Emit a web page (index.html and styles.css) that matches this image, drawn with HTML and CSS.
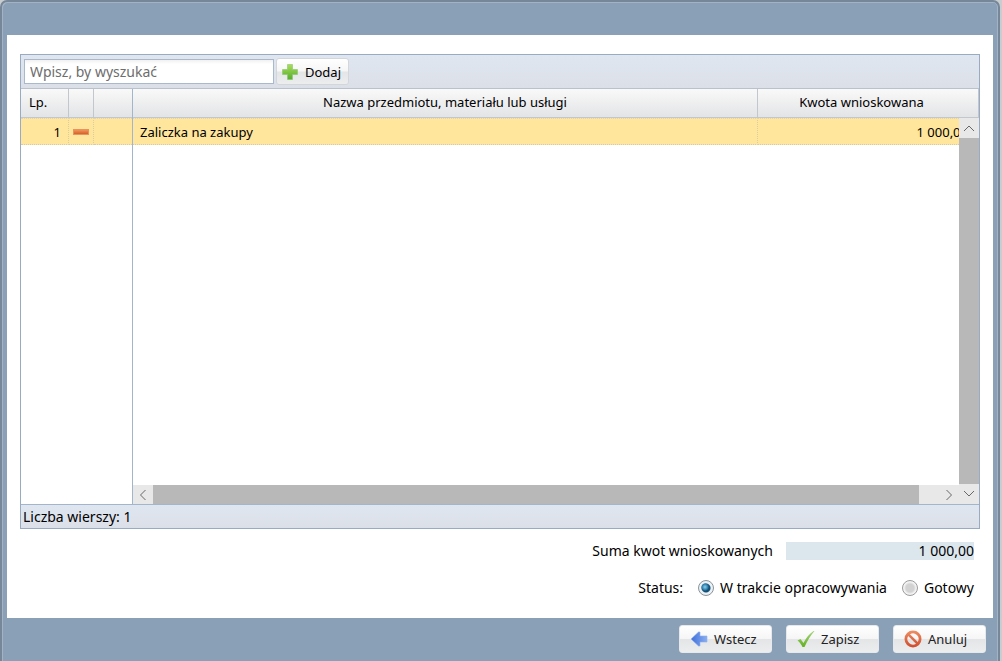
FILE: index.html
```
<!DOCTYPE html>
<html lang="pl">
<head>
<meta charset="utf-8">
<title>Pozycje wniosku</title>
<link rel="stylesheet" href="styles.css">
</head>
<body>
<form class="window">
  <main class="content">
    <section class="panel">
      <div class="toolbar">
        <input class="search" type="text" placeholder="Wpisz, by wyszukać" aria-label="Wyszukaj">
        <button class="btn btn-add" type="button">
          <svg class="icon" viewBox="0 0 16 16" aria-hidden="true"><defs><linearGradient id="plus" x1="0" y1="0" x2="0" y2="1"><stop offset="0" stop-color="#a9dd5c"/><stop offset="1" stop-color="#56ad2c"/></linearGradient></defs><path d="M5.5 .5h5v5h5v5h-5v5h-5v-5h-5v-5h5z" fill="url(#plus)" stroke="#8cc56a" stroke-opacity=".6"/></svg>
          Dodaj
        </button>
      </div>
      <div class="grid">
        <div class="locked">
          <table class="table">
            <colgroup><col class="col-no"><col class="col-icon"><col></colgroup>
            <thead><tr><th class="left">Lp.</th><th></th><th></th></tr></thead>
            <tbody><tr><td class="number">1</td><td class="icon-cell"><button class="remove" type="button" aria-label="Usuń"><svg viewBox="0 0 16 6" aria-hidden="true"><defs><linearGradient id="minus" x1="0" y1="0" x2="0" y2="1"><stop offset="0" stop-color="#f39a60"/><stop offset="1" stop-color="#d25a24"/></linearGradient></defs><rect x=".5" y=".5" width="15" height="5" fill="url(#minus)" stroke="#e8935c"/></svg></button></td><td></td></tr></tbody>
          </table>
        </div>
        <div class="main">
          <table class="table">
            <colgroup><col><col class="col-amount"></colgroup>
            <thead><tr><th>Nazwa przedmiotu, materiału lub usługi</th><th class="amount-head">Kwota wnioskowana</th></tr></thead>
            <tbody><tr><td>Zaliczka na zakupy</td><td class="amount">1 000,00</td></tr></tbody>
          </table>
          <div class="vscroll">
            <span class="arrow"><svg viewBox="0 0 12 12" aria-hidden="true"><path d="M1 9l5-5 5 5"/></svg></span>
            <span class="thumb"></span>
            <span class="arrow"><svg viewBox="0 0 12 12" aria-hidden="true"><path d="M1 3l5 5 5-5"/></svg></span>
          </div>
          <div class="hscroll">
            <span class="arrow"><svg viewBox="0 0 12 12" aria-hidden="true"><path d="M8.500 1l-5 5 5 5"/></svg></span>
            <span class="thumb"></span>
            <span class="track"></span>
            <span class="arrow"><svg viewBox="0 0 12 12" aria-hidden="true"><path d="M3.500 1l5 5-5 5"/></svg></span>
          </div>
        </div>
      </div>
      <div class="status">Liczba wierszy: 1</div>
    </section>
    <div class="summary">
      <label for="sum">Suma kwot wnioskowanych</label>
      <input id="sum" class="sum" type="text" value="1 000,00" readonly>
    </div>
    <div class="state" role="radiogroup" aria-labelledby="state-label">
      <span id="state-label">Status:</span>
      <label class="option"><input class="radio" type="radio" name="state" checked>W trakcie opracowywania</label>
      <label class="option"><input class="radio" type="radio" name="state">Gotowy</label>
    </div>
  </main>
  <footer class="actions">
    <button class="btn" type="button">
      <svg class="icon-action" viewBox="0 0 18 18" aria-hidden="true"><defs><linearGradient id="back" x1="0" y1="0" x2="1" y2="0"><stop offset="0" stop-color="#3f6fdb"/><stop offset="1" stop-color="#8aaef0"/></linearGradient></defs><path d="M1 9L8.500 2H10v4h7v6h-7v4H8.500z" fill="url(#back)" stroke="#8fb0ee" stroke-width=".6"/></svg>
      Wstecz
    </button>
    <button class="btn" type="button">
      <svg class="icon-action" viewBox="0 0 18 18" aria-hidden="true"><defs><linearGradient id="check" x1="0" y1="0" x2="0" y2="1"><stop offset="0" stop-color="#a8d67c"/><stop offset="1" stop-color="#62b01e"/></linearGradient></defs><path d="M.500 10.500L3.500 9l3 4C9 8 12 4 16.500 1h1C14 5 10.500 10.500 7.500 17H5.500C4.500 14.500 2.500 12 .500 10.500z" fill="url(#check)"/></svg>
      Zapisz
    </button>
    <button class="btn" type="button">
      <svg class="icon-action" viewBox="0 0 18 18" aria-hidden="true"><defs><linearGradient id="ban" x1="0" y1="0" x2="0" y2="1"><stop offset="0" stop-color="#ee9063"/><stop offset="1" stop-color="#cf4a2c"/></linearGradient></defs><path fill="url(#ban)" fill-rule="evenodd" d="M9 0.500a8.500 8.500 0 1 0 0 17a8.500 8.500 0 1 0 0-17zM6 4.200A5.700 5.700 0 0 1 13.800 12zM4.200 6A5.700 5.700 0 0 0 12 13.800z"/></svg>
      Anuluj
    </button>
  </footer>
</form>
</body>
</html>
```
FILE: styles.css
```
* { box-sizing: border-box; }

body {
  margin: 0;
  padding-right: 2px;
  background: #c9cdd0;
  color: #000;
  font: 14px/20px "Noto Sans", "Open Sans", sans-serif;
}

button, input { font: inherit; color: inherit; margin: 0; }

.window {
  display: flex;
  flex-direction: column;
  min-height: 100vh;
  padding: 33px 5px 0;
  background: #8aa0b6;
  border: 2px solid #76879a;
  border-bottom: 0;
  border-radius: 7px 7px 0 0;
  box-shadow: inset 1px 1px 0 #a3b3c4, inset -1px 0 0 #a3b3c4;
}

.content {
  flex: 1;
  display: flex;
  flex-direction: column;
  padding: 19px 13px 20px;
  background: #fff;
}

.panel {
  flex: 1;
  display: flex;
  flex-direction: column;
  border: 1px solid #99abc3;
}

.toolbar {
  display: flex;
  align-items: center;
  gap: 2px;
  height: 33px;
  padding: 0 3px;
  background: linear-gradient(#e0e6f0, #dbe0e8);
}

.search {
  width: 250px;
  height: 25px;
  padding: 0 5px;
  border: 1px solid #a9b8cb;
  background: linear-gradient(#f1f1f1, #fff 4px);
  font-size: 14px;
}
.search::placeholder { color: #6d6d6d; opacity: 1; }

.btn {
  display: inline-flex;
  align-items: center;
  gap: 6px;
  height: 28px;
  min-width: 93px;
  padding: 0 10px;
  border: 1px solid #e6e8eb;
  border-radius: 3px;
  background: linear-gradient(#fff, #f6f6f6 48%, #e4e5e7 52%, #eceded);
  color: #222;
  font-size: 13px;
  white-space: nowrap;
}
.btn-add {
  height: 27px;
  min-width: 0;
  padding: 0 7px 0 5px;
  gap: 7px;
  border-color: #d3d7dc;
  color: #000;
}
.icon { width: 16px; height: 16px; }
.icon-action { width: 18px; height: 18px; }

.grid {
  flex: 1;
  display: grid;
  grid-template-columns: 112px minmax(0, 1fr);
  border-top: 1px solid #b9c1cc;
}
.locked { border-right: 1px solid #a3b5cc; }
.main {
  display: grid;
  grid-template-columns: minmax(0, 1fr) 20px;
  grid-template-rows: 29px minmax(0, 1fr) 19px;
}
.main .table { grid-column: 1 / 3; grid-row: 1 / 3; align-self: start; }

.table {
  width: 100%;
  border-collapse: separate;
  border-spacing: 0;
  table-layout: fixed;
  font-size: 13px;
}
.col-no { width: 48px; }
.col-icon { width: 25px; }
.col-amount { width: 221px; }
.table th {
  height: 29px;
  padding: 0 8px 2px;
  border-right: 1px solid #c2c6cd;
  border-bottom: 1px solid #c2c6cd;
  background: linear-gradient(#f9f9f9, #e3e4e6);
  font-weight: 400;
}
.locked th:last-child { border-right: 0; }
.table .left { text-align: left; }
.table .amount-head { padding-right: 21px; }
.table td {
  height: 27px;
  padding: 0 7px;
  border-top: 1px dotted #d9d3c0;
  border-right: 1px dotted #d9cda4;
  border-bottom: 1px dotted #d3cba9;
  background: #ffe69c;
}
.table td:last-child { border-right: 0; }
.table .number, .table .amount { text-align: right; }
.table .amount { padding-right: 11px; }
.table .icon-cell { padding: 0 4px; }
.remove {
  display: block;
  width: 16px;
  height: 6px;
  padding: 0;
  border: 0;
  background: none;
}
.remove svg { display: block; }

.vscroll {
  grid-column: 2;
  grid-row: 2 / 4;
  z-index: 1;
  display: flex;
  flex-direction: column;
}
.hscroll { grid-column: 1; grid-row: 3; display: flex; }
.arrow {
  display: grid;
  place-items: center;
  width: 20px;
  height: 20px;
  background: #e8e8e8;
}
.hscroll .arrow { height: 19px; }
.arrow svg { width: 12px; height: 12px; fill: none; stroke: #686868; stroke-width: 1; }
.thumb { flex: 1; background: #b8b8b8; }
.track { width: 20px; background: #e8e8e8; }

.status {
  height: 24px;
  padding: 2px;
  border-top: 1px solid #a3b5cc;
  background: linear-gradient(#e0e6f0, #dbe0e8);
}

.summary, .state {
  display: flex;
  justify-content: flex-end;
  align-items: center;
  padding-right: 6px;
}
.summary { gap: 13px; margin-top: 12px; }
.sum {
  width: 188px;
  height: 18px;
  padding: 0;
  border: 0;
  background: #dce6ed;
  text-align: right;
}
.state { gap: 15px; margin-top: 17px; }
.option { display: flex; align-items: center; gap: 6px; }
.radio {
  appearance: none;
  width: 16px;
  height: 16px;
  border: 1px solid #9b9b9b;
  border-radius: 50%;
  background: radial-gradient(circle, #d2d2d2 0 4px, #f3f3f3 6px);
}
.radio:checked {
  border-color: #8c9398;
  background: radial-gradient(circle at 6px 6px, #8fd0ee 0, #2b7ba8 3px, transparent 4px), radial-gradient(circle, #174f74 0 4px, #eaf2f6 5px);
}

.actions {
  display: flex;
  justify-content: flex-end;
  gap: 14px;
  padding: 7px 7px 8px;
}
```
